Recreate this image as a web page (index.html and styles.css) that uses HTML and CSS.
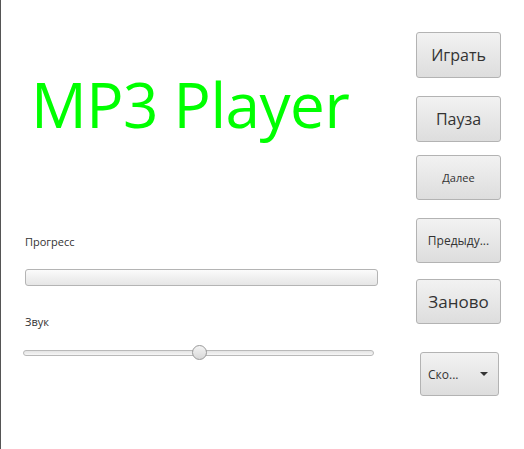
FILE: index.html
```html
<!DOCTYPE html>
<html>
<head>
<meta charset="utf-8">
<link rel="stylesheet" href="styles.css">
</head>
<body>
<div class="app">
  <div class="main">
    <h1 class="title">MP3 Player</h1>
    <div class="label label-progress">Прогресс</div>
    <div class="progress"></div>
    <div class="label label-sound">Звук</div>
    <div class="slider">
      <div class="track"></div>
      <div class="thumb"></div>
    </div>
  </div>
  <div class="side">
    <button class="btn btn-play">Играть</button>
    <button class="btn btn-pause">Пауза</button>
    <button class="btn btn-next">Далее</button>
    <button class="btn btn-prev">Предыду...</button>
    <button class="btn btn-again">Заново</button>
    <div class="combo"><span class="combo-text">Ско...</span><span class="arrow"></span></div>
  </div>
</div>
</body>
</html>
```
FILE: styles.css
```css
html, body {
  margin: 0;
  padding: 0;
  background: #ffffff;
}
body {
  width: 524px;
  height: 449px;
  overflow: hidden;
  font-family: "Open Sans", "Noto Sans", sans-serif;
  color: #333333;
}
.app {
  display: flex;
  height: 449px;
  border-left: 1px solid #555555;
  box-sizing: border-box;
}
.main {
  width: 415px;
  padding-left: 24px;
  box-sizing: border-box;
}
.title {
  margin: 64px 0 0 6px;
  font-weight: normal;
  font-size: 62px;
  line-height: 80px;
  color: #00ff00;
  letter-spacing: -0.5px;
}
.label {
  font-size: 11px;
  line-height: 14px;
  color: #333333;
}
.label-progress {
  margin-top: 91px;
}
.progress {
  margin-top: 20px;
  width: 353px;
  height: 17px;
  box-sizing: border-box;
  border: 1px solid #b4b4b4;
  border-radius: 3px;
  background: linear-gradient(#fbfbfb, #f0f0f0 50%, #e6e6e6);
}
.label-sound {
  margin-top: 29px;
}
.slider {
  position: relative;
  margin-top: 17px;
  margin-left: -2px;
  width: 351px;
  height: 14px;
}
.track {
  position: absolute;
  left: 0;
  right: 0;
  top: 4px;
  height: 6px;
  box-sizing: border-box;
  border: 1px solid #b9b9b9;
  border-radius: 3px;
  background: linear-gradient(#e4e4e4, #f6f6f6);
}
.thumb {
  position: absolute;
  left: 169px;
  top: -1px;
  width: 15px;
  height: 15px;
  box-sizing: border-box;
  border-radius: 50%;
  border: 1px solid #9a9a9a;
  background: linear-gradient(#f4f4f4, #d8d8d8);
}
.side {
  display: flex;
  flex-direction: column;
  align-items: flex-start;
  padding-top: 32px;
}
.btn {
  width: 85px;
  height: 46px;
  margin: 0;
  padding: 0;
  box-sizing: border-box;
  border: 1px solid #b3b3b3;
  border-radius: 3px;
  background: linear-gradient(#f2f2f2, #dddddd);
  font-family: "Open Sans", "Noto Sans", sans-serif;
  color: #333333;
  white-space: nowrap;
}
.btn-play { font-size: 16px; }
.btn-pause { font-size: 16px; margin-top: 18px; }
.btn-next { font-size: 11px; margin-top: 13px; height: 45px; }
.btn-prev { font-size: 12px; margin-top: 18px; height: 45px; }
.btn-again { font-size: 17px; margin-top: 16px; height: 45px; }
.combo {
  margin-top: 28px;
  margin-left: 4px;
  width: 79px;
  height: 44px;
  box-sizing: border-box;
  border: 1px solid #b3b3b3;
  border-radius: 3px;
  background: linear-gradient(#f2f2f2, #dddddd);
  display: flex;
  align-items: center;
  justify-content: space-between;
  padding: 0 10px 0 7px;
  font-size: 12px;
}
.arrow {
  width: 0;
  height: 0;
  border-left: 4px solid transparent;
  border-right: 4px solid transparent;
  border-top: 4px solid #333333;
}
```
